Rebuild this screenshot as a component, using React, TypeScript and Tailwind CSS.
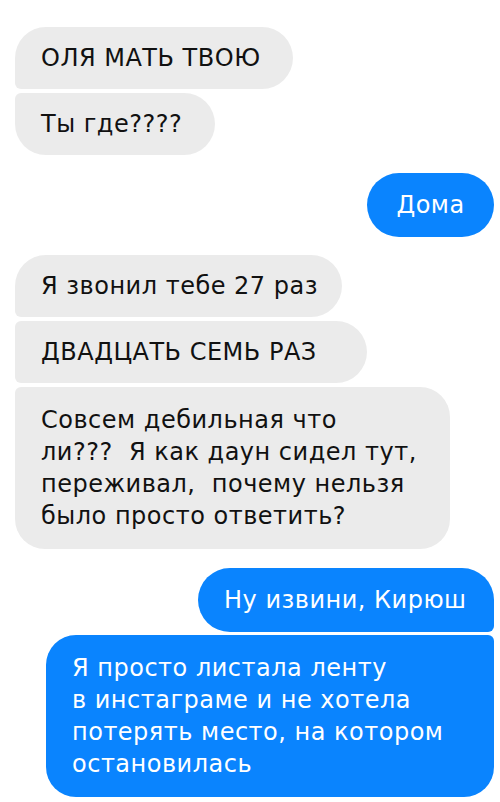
import React from 'react';

type Msg = {
  lines: string[];
  mine: boolean;
  width: string;
  radius: string;
  gapTop: string;
};

export default function App() {
  const messages: Msg[] = [
    { lines: ['ОЛЯ МАТЬ ТВОЮ'], mine: false, width: 'w-[278px]', radius: 'rounded-[31px] rounded-bl-[6px]', gapTop: 'mt-0' },
    { lines: ['Ты где????'], mine: false, width: 'w-[200px]', radius: 'rounded-[31px] rounded-tl-[6px]', gapTop: 'mt-[4px]' },
    { lines: ['Дома'], mine: true, width: 'w-[127px]', radius: 'rounded-[32px]', gapTop: 'mt-[18px]' },
    { lines: ['Я звонил тебе 27 раз'], mine: false, width: 'w-[327px]', radius: 'rounded-[31px] rounded-bl-[6px]', gapTop: 'mt-[18px]' },
    {
      lines: ['ДВАДЦАТЬ СЕМЬ РАЗ'],
      mine: false,
      width: 'w-[352px]',
      radius: 'rounded-[31px] rounded-tl-[6px] rounded-bl-[6px]',
      gapTop: 'mt-[4px]',
    },
    {
      lines: ['Совсем дебильная что', 'ли???  Я как даун сидел тут,', 'переживал,  почему нельзя', 'было просто ответить?'],
      mine: false,
      width: 'w-[435px]',
      radius: 'rounded-[30px] rounded-tl-[6px]',
      gapTop: 'mt-[4px]',
    },
    { lines: ['Ну извини, Кирюш'], mine: true, width: 'w-[296px]', radius: 'rounded-[32px] rounded-br-[6px]', gapTop: 'mt-[19px]' },
    {
      lines: ['Я просто листала ленту', 'в инстаграме и не хотела', 'потерять место, на котором', 'остановилась'],
      mine: true,
      width: 'w-[448px]',
      radius: 'rounded-[30px] rounded-tr-[6px]',
      gapTop: 'mt-[3px]',
    },
  ];

  return (
    <div className="w-[500px] h-[802px] bg-white overflow-hidden pt-[27px] pl-[15px] pr-[6px] flex flex-col font-['DejaVu_Sans',sans-serif]">
      {messages.map((m, idx) => (
        <div key={idx} className={`flex ${m.mine ? 'justify-end' : 'justify-start'} ${m.gapTop}`}>
          <div
            className={`${m.width} ${m.radius} ${m.lines[0] === 'Дома' ? 'text-center px-0' : 'pl-[26px]'} ${
              m.lines.length > 1 ? 'py-[17px]' : m.mine ? 'py-4' : 'py-[15px]'
            } text-[24px] leading-[32px] tracking-[0.5px] whitespace-pre ${
              m.mine ? 'bg-[#0a84fe] text-white' : 'bg-[#ebebeb] text-[#111]'
            }`}
          >
            {m.lines.map((l, i) => (
              <div key={i}>{l}</div>
            ))}
          </div>
        </div>
      ))}
    </div>
  );
}
